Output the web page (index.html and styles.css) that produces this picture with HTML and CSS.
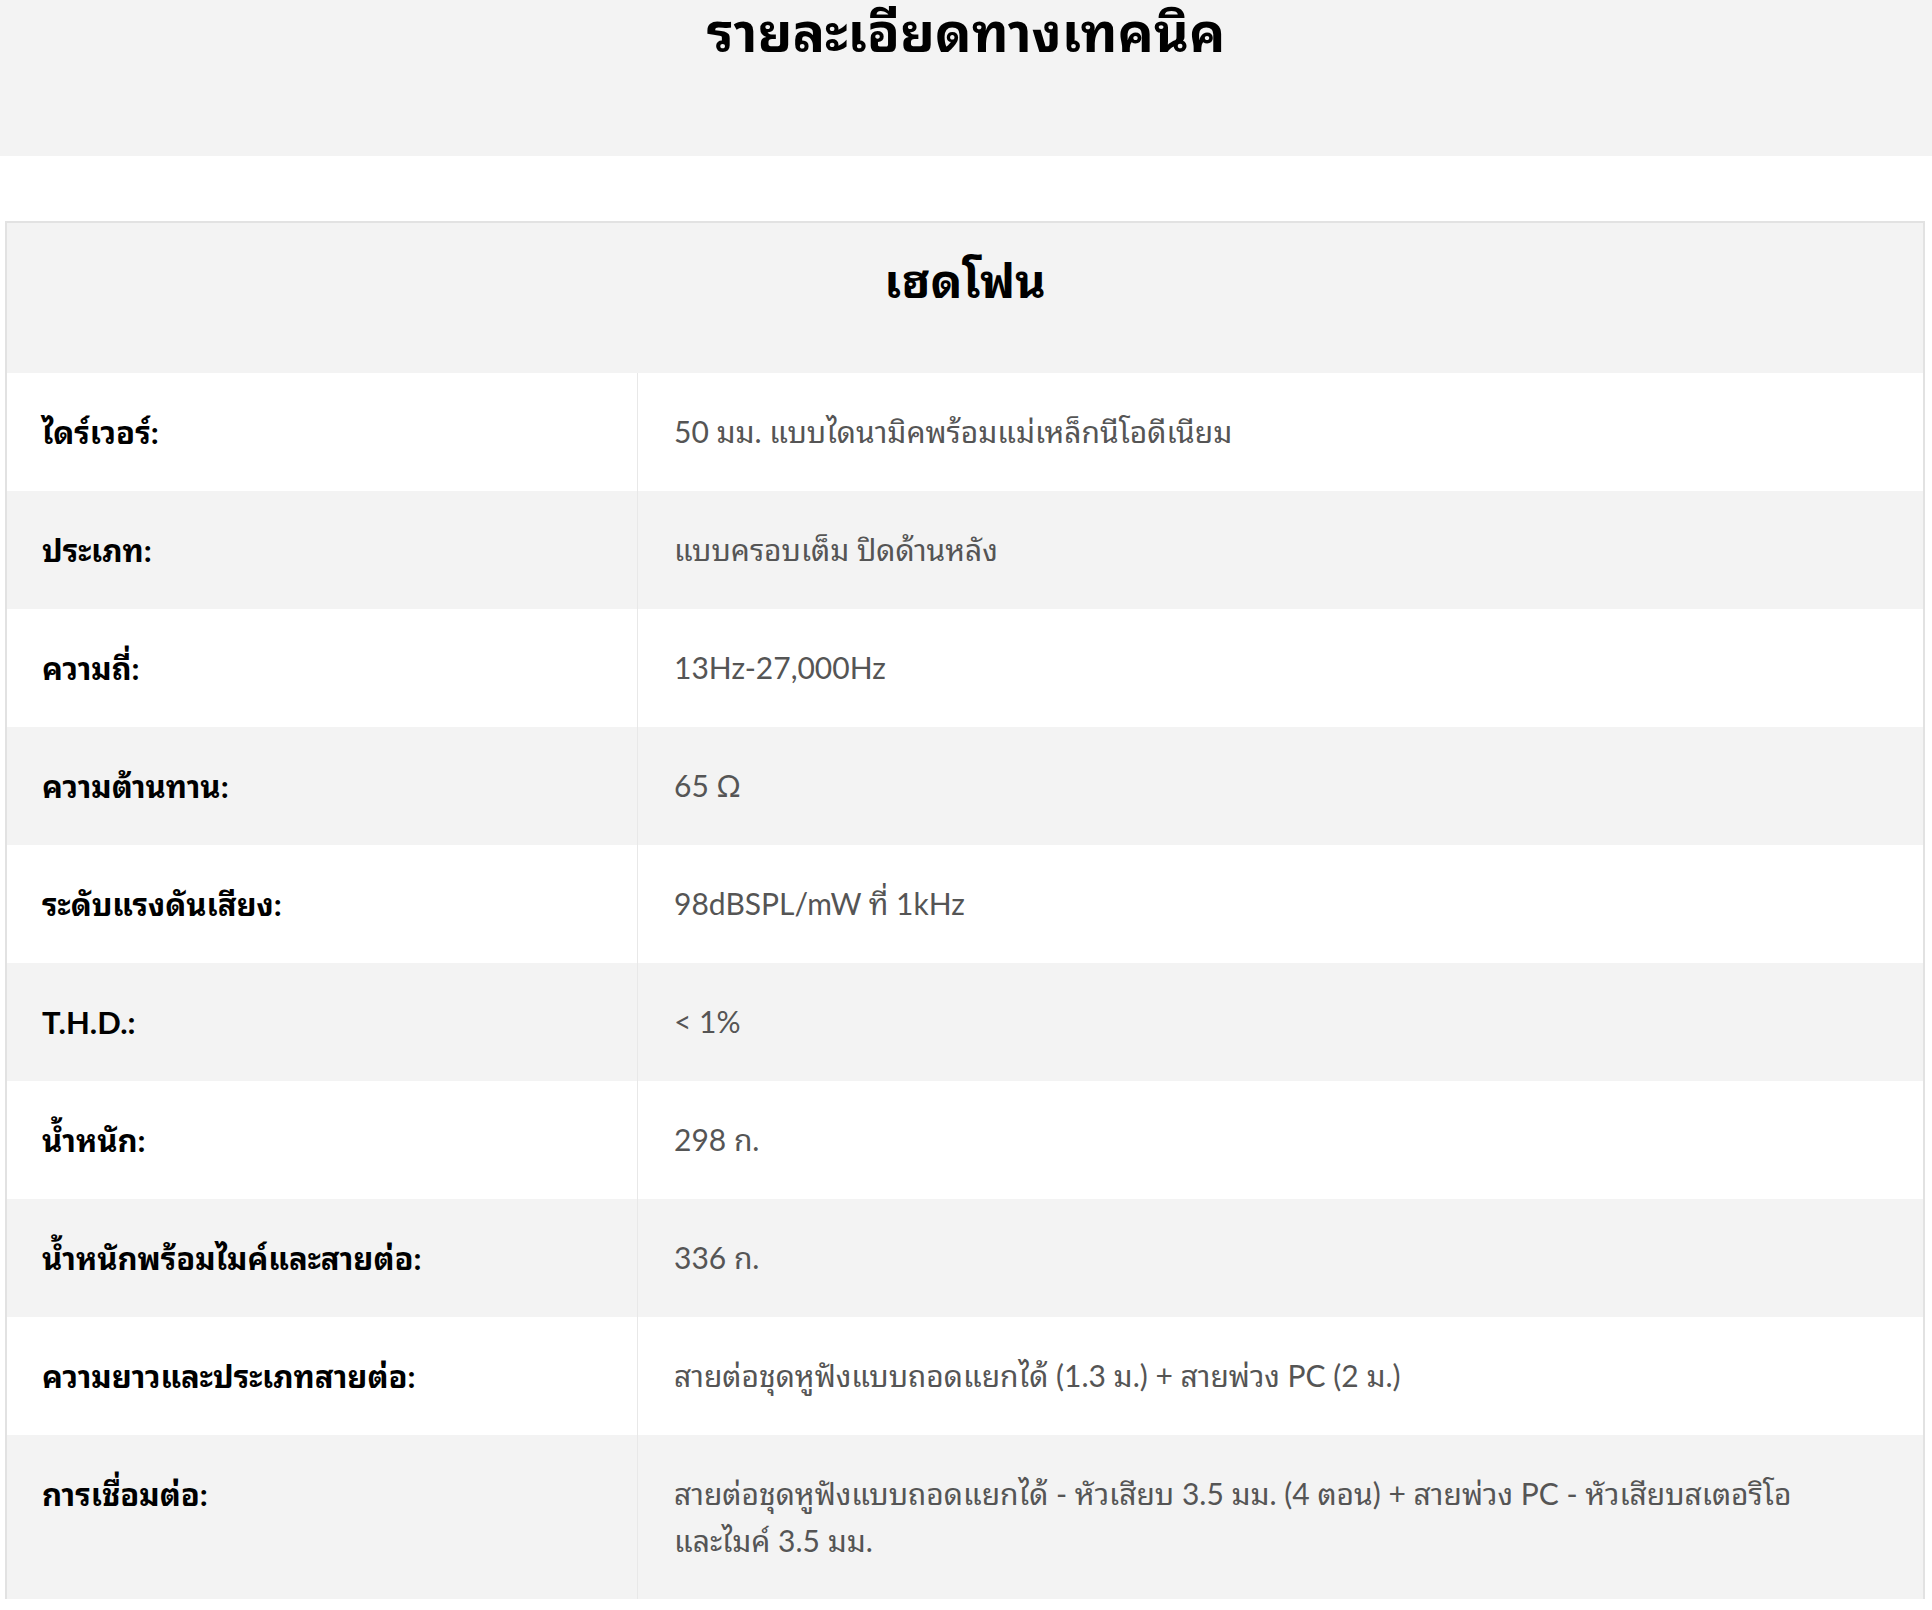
FILE: index.html
```html
<!DOCTYPE html>
<html lang="th">
<head>
<meta charset="utf-8">
<title>รายละเอียดทางเทคนิค</title>
<link rel="stylesheet" href="styles.css">
</head>
<body>
<header class="band">
  <h1 class="title">รายละเอียดทางเทคนิค</h1>
</header>
<section class="specs">
  <h2 class="specs-head">เฮดโฟน</h2>
  <div class="row">
    <div class="label">ไดร์เวอร์:</div>
    <div class="value">50 มม. แบบไดนามิคพร้อมแม่เหล็กนีโอดีเนียม</div>
  </div>
  <div class="row alt">
    <div class="label">ประเภท:</div>
    <div class="value">แบบครอบเต็ม ปิดด้านหลัง</div>
  </div>
  <div class="row">
    <div class="label">ความถี่:</div>
    <div class="value">13Hz-27,000Hz</div>
  </div>
  <div class="row alt">
    <div class="label">ความต้านทาน:</div>
    <div class="value">65 Ω</div>
  </div>
  <div class="row">
    <div class="label">ระดับแรงดันเสียง:</div>
    <div class="value">98dBSPL/mW ที่ 1kHz</div>
  </div>
  <div class="row alt">
    <div class="label">T.H.D.:</div>
    <div class="value">&lt; 1%</div>
  </div>
  <div class="row">
    <div class="label">น้ำหนัก:</div>
    <div class="value">298 ก.</div>
  </div>
  <div class="row alt">
    <div class="label">น้ำหนักพร้อมไมค์และสายต่อ:</div>
    <div class="value">336 ก.</div>
  </div>
  <div class="row">
    <div class="label">ความยาวและประเภทสายต่อ:</div>
    <div class="value">สายต่อชุดหูฟังแบบถอดแยกได้ (1.3 ม.) + สายพ่วง PC (2 ม.)</div>
  </div>
  <div class="row alt">
    <div class="label">การเชื่อมต่อ:</div>
    <div class="value">สายต่อชุดหูฟังแบบถอดแยกได้ - หัวเสียบ 3.5 มม. (4 ตอน) + สายพ่วง PC - หัวเสียบสเตอริโอ <span class="keep">และไมค์ 3.5 มม.</span></div>
  </div>
</section>
</body>
</html>
```

FILE: styles.css
```css
html, body {
  margin: 0;
  padding: 0;
  background: #ffffff;
}

body {
  font-family: Lato, "Noto Sans Thai Looped", Loma, Garuda, Waree, Kinnari, "Noto Sans Thai", sans-serif;
  color: #000;
}

.band {
  background: #f3f3f3;
  height: 156px;
  display: flex;
  justify-content: center;
  align-items: flex-start;
}

.title {
  margin: 0;
  font-size: 54px;
  font-weight: 700;
  line-height: 64px;
  color: #000;
}

.specs {
  margin: 65px 0 0 5px;
  width: 1916px;
  border: 2px solid #e2e2e2;
  border-bottom: none;
}

.specs-head {
  margin: 0;
  background: #f3f3f3;
  height: 150px;
  display: flex;
  justify-content: center;
  align-items: center;
  font-size: 47px;
  font-weight: 700;
  padding-bottom: 44px;
  box-sizing: border-box;
}

.row {
  display: grid;
  grid-template-columns: 630px 1fr;
  background: #ffffff;
}

.row.alt {
  background: #f3f3f3;
}

.label {
  padding: 35px 20px 35px 35px;
  font-size: 31px;
  font-weight: 700;
  line-height: 48px;
  color: #000;
}

.value {
  border-left: 1px solid #e8e8e8;
  padding: 35px 40px 35px 36px;
  font-size: 30px;
  font-weight: 400;
  line-height: 47px;
  color: #555;
}

.keep {
  white-space: nowrap;
}
```
